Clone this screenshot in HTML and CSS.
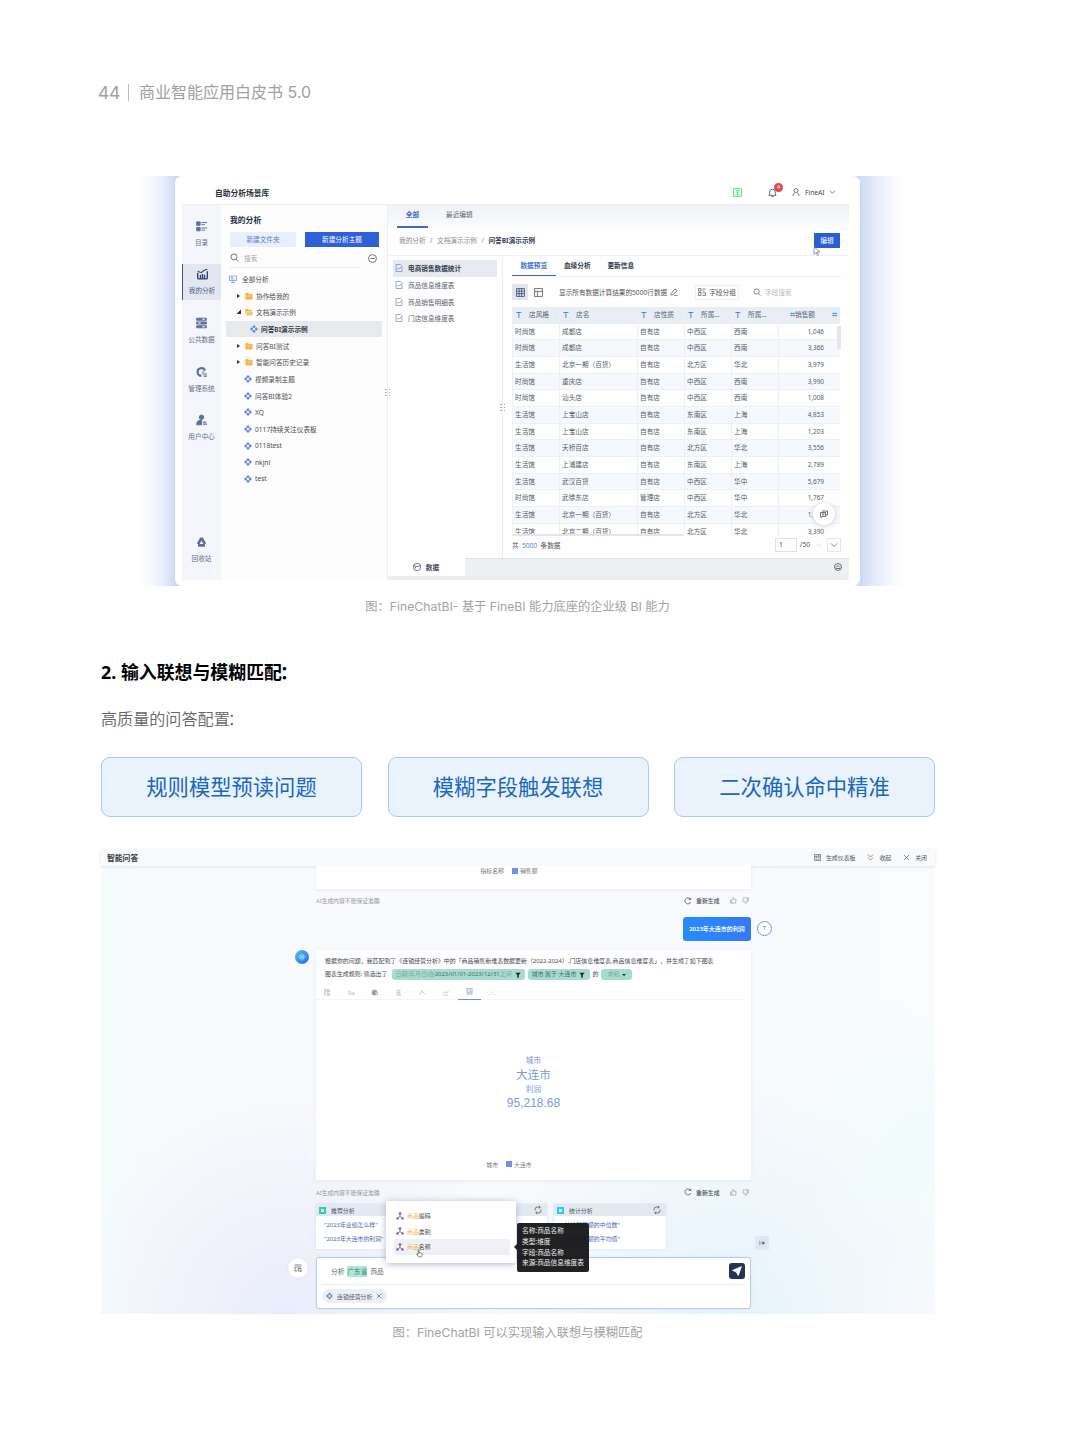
FILE: index.html
```
<!DOCTYPE html>
<html lang="zh-CN">
<head>
<meta charset="utf-8">
<title>商业智能应用白皮书 5.0</title>
<link rel="stylesheet" href="styles.css">
</head>
<body>
<svg width="0" height="0" class="defs">
  <symbol id="search" viewBox="0 0 16 16"><circle cx="7" cy="7" r="5.3"/><path d="M11 11l4 4"/></symbol>
  <symbol id="dia" viewBox="0 0 16 16"><path d="M8 0l8 8-8 8-8-8z" fill="currentColor" stroke="none"/><path d="M8 5L11 8 8 11 5 8z" fill="#fff" stroke="none"/><path d="M3 3l3 3M13 3l-3 3M3 13l3-3M13 13l-3-3" stroke="#fff" stroke-width="1.200"/></symbol>
  <symbol id="folder" viewBox="0 0 16 16"><path d="M1 2h5l2 2h7v11H1z" fill="#f5b443" stroke="none"/><path d="M4 8h8" stroke="#fde2a8" stroke-width="1.500"/></symbol>
  <symbol id="folderopen" viewBox="0 0 16 16"><path d="M1 2h5l2 2h6v3H4l-3 7z" fill="#f5b443" stroke="none"/><path d="M4.500 8H16l-2 7H2z" fill="#f8c568" stroke="none"/></symbol>
  <symbol id="doc" viewBox="0 0 16 16"><path d="M2 1h9l3 3v11H2z"/><path d="M5 11l2-3 2 2 3-4"/></symbol>
  <symbol id="reload" viewBox="0 0 16 16"><path d="M13.500 10A6 6 0 1 1 12.500 4M13.500 1v4h-4"/></symbol>
  <symbol id="refresh" viewBox="0 0 16 16"><path d="M2 9V7a5 5 0 0 1 5-5h5M14 7v2a5 5 0 0 1-5 5H4M10 0l2.500 2L10 5M6 11l-2.500 3L6 16"/></symbol>
  <symbol id="up" viewBox="0 0 16 16"><path d="M1 7h3v7H1zM4 7l3-6c2 0 2 1 2 5h5l-1 8H4"/></symbol>
  <symbol id="down" viewBox="0 0 16 16"><path d="M15 9h-3V2h3zM12 9l-3 6c-2 0-2-1-2-5H2l1-8h9"/></symbol>
  <symbol id="chev" viewBox="0 0 16 16"><path d="M2 5l6 6 6-6"/></symbol>
  <symbol id="nodes" viewBox="0 0 16 16"><circle cx="8" cy="3" r="2.200" fill="currentColor"/><circle cx="3" cy="13" r="2" fill="currentColor"/><circle cx="13" cy="13" r="2" fill="currentColor"/><path d="M8 4v5l-4 3M8 9l4 3" stroke-width="2"/></symbol>
  <symbol id="funnel" viewBox="0 0 16 16"><path d="M1 2h14l-5 6v7H6V8z" fill="currentColor" stroke="none"/></symbol>
  <symbol id="x" viewBox="0 0 16 16"><path d="M2 2l12 12M14 2L2 14"/></symbol>
</svg>

<header class="page-head"><span class="num">44</span><i></i><span class="book">商业智能应用白皮书 5.0</span></header>

<section class="fig1">
  <div class="window">
    <div class="topbar">
      <b class="app-name">自助分析场景库</b>
      <svg class="ic green" viewBox="0 0 16 16"><path d="M1 1h14v14H1zM4 4h8M8 12V6M5 8.500l3-2.500 3 2.500M4 12h8"/></svg>
      <span class="bell"><svg class="ic" viewBox="0 0 16 16"><path d="M1 13h14M3 13V7a5 5 0 0 1 10 0v6M6 15h4"/></svg><em>4</em></span>
      <svg class="ic person" viewBox="0 0 16 16"><circle cx="8" cy="5" r="4"/><path d="M2 16c0-4 3-6 4-7M14 16c0-4-3-6-4-7"/></svg>
      <span class="user">FineAI</span>
      <svg class="ic chevr"><use href="#chev"/></svg>
    </div>
    <div class="body">
      <nav class="rail">
        <a><svg viewBox="0 0 16 16"><path d="M1 2h5v5H1zM1 10h5v5H1z" fill="currentColor"/><path d="M8 3h8M8 6h5M8 11h8M8 14h5"/></svg>目录</a>
        <a class="on"><svg viewBox="0 0 16 16"><path d="M1 15V6M15 15V4M1 15h14M5 14V9M8 14V8M11 14V9" stroke-width="2"/><path d="M1 4l5 2 4-3 5-2" stroke-width="1.500"/></svg>我的分析</a>
        <a><svg viewBox="0 0 16 16"><path d="M1 1h14v3H1zM1 6.500h14v3H1zM1 12h14v3H1z" fill="currentColor"/><path d="M9 2.500h4M3 8h4M9 13.500h4" stroke="#fff"/></svg>公共数据</a>
        <a><svg viewBox="0 0 16 16"><path d="M13 6A5.500 5.500 0 1 0 8 13.500" stroke-width="3"/><path d="M9 8h3M9 11h7M11 14h5" stroke-width="1.500"/></svg>管理系统</a>
        <a><svg viewBox="0 0 16 16"><circle cx="8" cy="4" r="3.200" fill="currentColor"/><path d="M1 15c0-5 3-7 7-7v7z" fill="currentColor"/><path d="M10 11h5M10 14h6" stroke-width="2"/></svg>用户中心</a>
        <a class="bin"><svg viewBox="0 0 16 16"><path d="M8 2l5 9M8 2L3 11M3 13h10" stroke-width="4"/></svg>回收站</a>
      </nav>
      <aside class="tree">
        <h4>我的分析</h4>
        <div class="btns"><span class="b1">新建文件夹</span><span class="b2">新建分析主题</span></div>
        <div class="find"><span><svg class="ic"><use href="#search"/></svg>搜索</span><svg class="ic c" viewBox="0 0 16 16"><circle cx="8" cy="8" r="7"/><path d="M4 8h8"/></svg></div>
        <ul>
          <li class="l0"><svg class="ic blue" viewBox="0 0 16 16"><path d="M1 2h14v9H1zM8 11v3M4 15h8M4 5h4M4 8h7"/></svg>全部分析</li>
          <li class="l1"><i class="tri"></i><svg class="ic"><use href="#folder"/></svg>协作给我的</li>
          <li class="l1"><i class="tri open"></i><svg class="ic"><use href="#folderopen"/></svg>文档演示示例</li>
          <li class="l2 sel"><svg class="ic blue"><use href="#dia"/></svg>问答BI演示示例</li>
          <li class="l1"><i class="tri"></i><svg class="ic"><use href="#folder"/></svg>问答BI测试</li>
          <li class="l1"><i class="tri"></i><svg class="ic"><use href="#folder"/></svg>智能问答历史记录</li>
          <li class="l1b"><svg class="ic blue"><use href="#dia"/></svg>视频录制主题</li>
          <li class="l1b"><svg class="ic blue"><use href="#dia"/></svg>问答BI体验2</li>
          <li class="l1b"><svg class="ic blue"><use href="#dia"/></svg>XQ</li>
          <li class="l1b"><svg class="ic blue"><use href="#dia"/></svg>0117持续关注仪表板</li>
          <li class="l1b"><svg class="ic blue"><use href="#dia"/></svg>0118test</li>
          <li class="l1b"><svg class="ic blue"><use href="#dia"/></svg>nkjnl</li>
          <li class="l1b"><svg class="ic blue"><use href="#dia"/></svg>test</li>
        </ul>
        <span class="grip"></span>
      </aside>
      <main class="main">
        <div class="tabs"><b>全部</b><span>最近编辑</span></div>
        <div class="crumb"><span>我的分析</span><span>/</span><span>文档演示示例</span><span>/</span><b>问答BI演示示例</b><span class="edit">编辑</span>
          <svg class="cursor" viewBox="0 0 16 20"><path d="M2 1v15l4-4 3 6 2-1-3-6h6z" fill="#fff" stroke="#777"/></svg></div>
        <div class="split">
          <div class="files">
            <p class="on"><svg class="ic"><use href="#doc"/></svg>电商销售数据统计</p>
            <p><svg class="ic"><use href="#doc"/></svg>商品信息维度表</p>
            <p><svg class="ic"><use href="#doc"/></svg>商品销售明细表</p>
            <p><svg class="ic"><use href="#doc"/></svg>门店信息维度表</p>
            <span class="grip"></span>
          </div>
          <div class="detail">
            <div class="dtabs"><b class="on">数据预览</b><b>血缘分析</b><b>更新信息</b></div>
            <div class="tools">
              <span class="tg on"><svg class="ic" viewBox="0 0 16 16"><path d="M1 1h14v14H1zM1 5.500h14M1 10h14M5.500 1v14M10 1v14"/></svg></span>
              <span class="tg"><svg class="ic" viewBox="0 0 16 16"><path d="M1 1h14v14H1zM1 6h14M6 6v9"/></svg></span>
              <span class="info">显示所有数据计算结果的5000行数据</span><svg class="ic pen" viewBox="0 0 16 16"><path d="M2 11l8-9 4 3-7 8-5 1zM8 15h7"/></svg>
              <span class="group"><svg class="ic" viewBox="0 0 16 16"><path d="M1 1h5v5H1zM1 9h5v6H1zM9 2h6M9 6h4M9 10h6v5H9"/></svg>字段分组</span>
              <svg class="ic"><use href="#search"/></svg><span class="ph">字段搜索</span>
            </div>
            <div class="table">
              <div class="tr th"><span><i>T</i>店风格</span><span><i>T</i>店名</span><span><i>T</i>店性质</span><span><i>T</i>所属...</span><span><i>T</i>所属...</span><span class="n"><i>⌗</i>销售额<i>⌗</i></span></div>
              <div class="tr"><span>时尚馆</span><span>成都店</span><span>自有店</span><span>中西区</span><span>西南</span><span>1,046</span></div>
              <div class="tr"><span>时尚馆</span><span>成都店</span><span>自有店</span><span>中西区</span><span>西南</span><span>3,366</span></div>
              <div class="tr"><span>生活馆</span><span>北京一期（百货）</span><span>自有店</span><span>北方区</span><span>华北</span><span>3,979</span></div>
              <div class="tr"><span>时尚馆</span><span>重庆店</span><span>自有店</span><span>中西区</span><span>西南</span><span>3,990</span></div>
              <div class="tr"><span>时尚馆</span><span>汕头店</span><span>自有店</span><span>中西区</span><span>西南</span><span>1,008</span></div>
              <div class="tr"><span>生活馆</span><span>上宝山店</span><span>自有店</span><span>东南区</span><span>上海</span><span>4,853</span></div>
              <div class="tr"><span>生活馆</span><span>上宝山店</span><span>自有店</span><span>东南区</span><span>上海</span><span>1,203</span></div>
              <div class="tr"><span>生活馆</span><span>天桥百店</span><span>自有店</span><span>北方区</span><span>华北</span><span>3,556</span></div>
              <div class="tr"><span>生活馆</span><span>上浦建店</span><span>自有店</span><span>东南区</span><span>上海</span><span>2,789</span></div>
              <div class="tr"><span>生活馆</span><span>武汉百货</span><span>自有店</span><span>中西区</span><span>华中</span><span>5,679</span></div>
              <div class="tr"><span>时尚馆</span><span>武徐东店</span><span>管理店</span><span>中西区</span><span>华中</span><span>1,767</span></div>
              <div class="tr"><span>生活馆</span><span>北京一期（百货）</span><span>自有店</span><span>北方区</span><span>华北</span><span>1,767</span></div>
              <div class="tr"><span>生活馆</span><span>北京二期（百货）</span><span>自有店</span><span>北方区</span><span>华北</span><span>3,390</span></div>
              <i class="vbar"></i><i class="hbar"></i>
            </div>
            <div class="chat"><svg class="ic" viewBox="0 0 16 16"><path d="M4 2h11v8h-3M1 5h10v8H5l-3 2v-2H1zM4 8h5M4 10h3"/></svg></div>
            <div class="foot"><span>共&ensp;<u>5000</u>&ensp;条数据</span><span class="pg">1</span><span class="tot">/50</span><svg class="ic up"><use href="#chev"/></svg><span class="nx"><svg class="ic"><use href="#chev"/></svg></span></div>
          </div>
        </div>
        <div class="bottom"><b><svg class="ic" viewBox="0 0 16 16"><ellipse cx="8" cy="4" rx="6.500" ry="3"/><path d="M1.500 4v8c0 4 13 4 13 0V4M5 8v3"/></svg>数据</b><svg class="ic c" viewBox="0 0 16 16"><circle cx="8" cy="8" r="7"/><path d="M4 9l4-4 4 4M4 11h8"/></svg></div>
      </main>
    </div>
  </div>
</section>
<p class="caption cap1"><span>图：FineChatBI- 基于 FineBI 能力底座的企业级 BI 能力</span></p>

<h2>2. 输入联想与模糊匹配<span>：</span></h2>
<p class="lead">高质量的问答配置<span>：</span></p>
<div class="pills"><div>规则模型预读问题</div><div>模糊字段触发联想</div><div>二次确认命中精准</div></div>

<section class="fig2">
  <div class="bar2"><b>智能问答</b>
    <span><svg class="ic" viewBox="0 0 16 16"><path d="M1 1h14v14H1zM1 5h14M5 5v10M8 8h5M8 12h5M10 1v4"/></svg>生成仪表板</span>
    <span><svg class="ic" viewBox="0 0 16 16"><path d="M2 1l6 6 6-6M2 8l6 6 6-6"/></svg>收起</span>
    <span><svg class="ic"><use href="#x"/></svg>关闭</span></div>
  <div class="col">
    <div class="prev legend"><span>指标名称</span><i></i><span>销售额</span></div>
    <div class="meta"><span>AI生成内容不能保证准确</span><svg class="ic rl"><use href="#reload"/></svg><b>重新生成</b><svg class="ic t"><use href="#up"/></svg><svg class="ic t"><use href="#down"/></svg></div>
    <div class="ask"><b>2023年大连市的利润</b><span class="me">T</span></div>
    <div class="answer">
      <span class="bot"><svg viewBox="0 0 16 16"><path d="M8 1l7 7-7 7-7-7zM4.500 4.500l7 7M11.500 4.500l-7 7M8 4.500L11.500 8 8 11.500 4.500 8z"/></svg></span>
      <p class="ln">根据你的问题，我匹配到了《连锁经营分析》中的「商品销售新维表数据更新（2022-2024）,门店信息维度表,商品信息维度表」，并生成了如下图表</p>
      <p class="ln l2">图表生成规则: 筛选出了 <span class="tag g1"><s>日期(年月日)在</s>2023/01/01-2023/12/31<s>之间</s><svg class="ic"><use href="#funnel"/></svg></span><span class="tag g2">城市 属于 大连市<svg class="ic"><use href="#funnel"/></svg></span><em>的</em><span class="tag g3"><s>求和</s><i></i></span></p>
      <div class="types">
        <span><svg viewBox="0 0 16 16"><path d="M2 1v14M2 2h12M6 6h8M6 10h4M6 14h5M12 9v6" stroke-width="2"/></svg></span>
        <span><svg viewBox="0 0 16 16"><path d="M2 14V5h4M6 14V9h5v5M14 14V6"/></svg></span>
        <span><svg viewBox="0 0 16 16"><circle cx="8" cy="8" r="6" fill="#999"/><path d="M8 8h7v6z" fill="#fff"/></svg></span>
        <span><svg viewBox="0 0 16 16"><path d="M5 3h6v5H5zM2 14h12M3 11h10"/></svg></span>
        <span><svg viewBox="0 0 16 16"><path d="M1 14l6-9 3 4 5 4M5 2l3 3"/></svg></span>
        <span><svg viewBox="0 0 16 16"><path d="M1 10l4-4 4 3 6-4M2 14h12"/></svg></span>
        <span class="on"><svg viewBox="0 0 16 16"><path d="M2 1h12v10H2zM5 4v4M8 4h3v4H8M1 14h14"/></svg></span>
        <span><svg viewBox="0 0 16 16"><path d="M3 12h2M7 8h2M11 3h2M11 13h3M3 4h1"/></svg></span>
      </div>
      <div class="kpi"><small>城市</small><strong>大连市</strong><small>利润</small><strong class="v">95,218.68</strong></div>
      <div class="legend"><span>城市</span><i></i><span>大连市</span></div>
    </div>
    <div class="meta m2"><span>AI生成内容不能保证准确</span><svg class="ic rl"><use href="#reload"/></svg><b>重新生成</b><svg class="ic t"><use href="#up"/></svg><svg class="ic t"><use href="#down"/></svg></div>
    <div class="sugs">
      <div><h5><i></i>推荐分析</h5><p>"2023年业绩怎么样"</p><p>"2023年大连市的利润"</p></div>
      <div><h5><i></i>归因分析<svg class="ic"><use href="#refresh"/></svg></h5><p>&nbsp;</p><p>&nbsp;</p></div>
      <div><h5><i class="cy"></i>统计分析<svg class="ic"><use href="#refresh"/></svg></h5><p>"统计销售额的中位数"</p><p>"统计销售额的平均值"</p></div>
      <span class="exp"><svg class="ic" viewBox="0 0 16 16"><path d="M2 2v12M4 8h10M10 4v8M10 4l5 4-5 4" fill="currentColor"/></svg></span>
    </div>
    <div class="input">
      <span class="hist"><svg class="ic" viewBox="0 0 16 16"><path d="M1 2h14M2 6h12M2 6v8h4M8 9h6v5H8zM13 14l2 2"/></svg></span>
      <div class="q"><span>分析</span><mark>广东省</mark><span>商品</span><a class="send"><svg viewBox="0 0 16 16"><path d="M15 1L1 7l5 2 5-4-4 5 3 5z" fill="#fff"/></svg></a></div>
      <div class="chip"><svg class="ic blue"><use href="#dia"/></svg>连锁经营分析<svg class="ic xx"><use href="#x"/></svg></div>
    </div>
    <div class="menu">
      <p><svg class="ic"><use href="#nodes"/></svg><em>商品</em>编码</p>
      <p><svg class="ic"><use href="#nodes"/></svg><em>商品</em>类别</p>
      <p class="on"><svg class="ic"><use href="#nodes"/></svg><em>商品</em>名称</p>
      <svg class="hand" viewBox="0 0 16 18"><path d="M5 10V2c0-1.500 2-1.500 2 0v5l6 1.500c2 .5 1 8-1 8.500H7L2 11c-.5-1.500 1.500-2 3-.5z" fill="#fff" stroke="#333"/></svg>
    </div>
    <div class="tip">名称:商品名称<br>类型:维度<br>字段:商品名称<br>来源:商品信息维度表</div>
  </div>
</section>
<p class="caption cap2"><span>图：FineChatBI 可以实现输入联想与模糊匹配</span></p>
</body>
</html>
```
FILE: styles.css
```
* { box-sizing: border-box; margin: 0; padding: 0; }
body { width: 1080px; height: 1439px; background: #fff; overflow: hidden; font-family: "Noto Sans", "Noto Sans CJK SC", sans-serif; color: #333; }
i, em { font-style: normal; }
s, u { text-decoration: none; }
ul { list-style: none; }
svg { fill: none; stroke: currentColor; stroke-width: 1.4; flex: none; }
.defs { position: absolute; }
.ic { width: 8px; height: 8px; }
.blue { color: #5c89e2; }

.page-head { height: 176px; padding: 82px 0 0 98px; display: flex; align-items: flex-start; color: #a0a0a0; line-height: 20px; font-size: 16px; white-space: nowrap; }
.page-head .num { width: 30px; padding-top: 1px; font-size: 17.5px; font-family: Inter, sans-serif; letter-spacing: -.3px; }
.page-head i { width: 1px; height: 17px; margin-top: 2px; background: #bbb; }
.page-head .book { margin-left: 10px; font-family: Inter, "Noto Sans CJK SC", sans-serif; }

.fig1 { margin-left: 130px; width: 780px; height: 410px; padding-left: 45px; background: linear-gradient(90deg, #fff 8px, #f8faff 20px, #e4ebfa 35px, #c9d7f3 46px, #c9d7f3 56px, #fff 57px, #fff 718px, #ccdaf5 719px, #ccdaf5 729px, #e3eafa 745px, #f8faff 763px, #fff 775px); }
.window { width: 685px; height: 410px; padding: 4px 11px 6px 7px; border-radius: 7px; background: #fff; font-size: 6.65px; }
.topbar { height: 24px; display: flex; align-items: center; padding-left: 33px; color: #444; }
.app-name { font-size: 7.75px; width: 518px; color: #2b2f3c; }
.green { color: #43d853; margin-right: 26px; width: 9px; height: 9px; }
.bell { position: relative; display: flex; margin-right: 15px; color: #3f4a66; }
.bell .ic { width: 9px; height: 9px; }
.bell em { position: absolute; left: 6px; top: -5px; width: 9px; height: 9px; border-radius: 5px; background: #e0484b; color: #fff; font-size: 6px; line-height: 9px; text-align: center; }
.user { margin: 0 4px 0 5px; width: 20px; }
.chevr { width: 7px; }
.body { height: 376px; display: flex; border-top: 1px solid #edeff3; box-shadow: inset 0 4px 5px -3px #e4e8ee; }
.rail { width: 39px; background: #f5f5fc; padding-top: 11px; display: flex; flex-direction: column; color: #66708c; }
.rail a { height: 37px; margin-bottom: 12px; padding-top: 4px; display: flex; flex-direction: column; align-items: center; gap: 6px; line-height: 10px; letter-spacing: -.05px; }
.rail svg { width: 11px; height: 12px; color: #5f7098; }
.rail a.on { margin-top: -1px; margin-bottom: 13px; background: #e4e7f1; border-left: 1px solid #3c5891; color: #4e5d80; }
.rail .on svg { color: #28427c; }
.rail .bin { margin-top: 73px; }
.tree { position: relative; width: 167px; padding: 9px 5px 0; border-right: 1px solid #eceef1; background: #fdfdfe; }
.tree h4 { padding-left: 4px; font-size: 7.8px; line-height: 12px; color: #262f45; }
.btns { display: flex; gap: 9px; margin: 6px 0 0 4px; line-height: 15px; text-align: center; }
.b1 { width: 66px; height: 15px; background: #e9effc; color: #5b82cd; }
.b2 { width: 74px; height: 15px; background: #2e60d8; color: #fff; }
.find { display: flex; align-items: center; height: 20px; margin: 1px 0 2.500px 4px; color: #aaa; }
.find span { width: 130px; height: 19px; display: flex; align-items: center; gap: 5px; border-bottom: 1px solid #e8e9eb; }
.find svg { color: #555; width: 9px; height: 9px; }
.find .c { margin-left: 8px; }
.tree li { height: 16.68px; display: flex; align-items: center; gap: 4px; color: #4a4c52; white-space: nowrap; }
.tree .l0 { padding-left: 3px; gap: 5px; }
.tree .l1 { padding-left: 11px; gap: 3.500px; }
.tree .l1b { padding-left: 18px; gap: 3px; }
.tree .l2 { padding-left: 24px; gap: 3px; }
.tree .sel { background: #e7eaec; color: #30343c; font-weight: 600; }
.tri { width: 3px; margin-right: 1px; border-left: 3px solid #333; border-top: 2.5px solid transparent; border-bottom: 2.5px solid transparent; }
.tri.open { border: 0; height: 4px; width: 4px; margin-right: 0; background: linear-gradient(135deg, transparent 50%, #333 50%); }
.grip { position: absolute; right: -3px; top: 183px; width: 6px; height: 8px; background: radial-gradient(circle, #aaa .7px, transparent 1px) 0 0 / 4px 3px; }
.main { width: 461px; display: flex; flex-direction: column; background: #fefefe; }
.tabs { height: 23px; padding-left: 9px; display: flex; background: linear-gradient(#eff3f8, #fafcfe); line-height: 20px; }
.tabs b { width: 31px; text-align: center; color: #3967d3; border-bottom: 2px solid #3d69cc; }
.tabs span { margin-left: 18px; color: #5d6475; }
.crumb { position: relative; height: 28px; display: flex; align-items: center; gap: 4.500px; padding: 0 9px 3px 11px; border-bottom: 1px solid #f0f1f3; color: #888b93; white-space: nowrap; }
.crumb b { color: #343d55; }
.edit { margin-left: auto; width: 26px; height: 15px; line-height: 15px; text-align: center; color: #fff; background: #2b5dd7; }
.cursor { position: absolute; right: 28px; top: 18px; width: 8px; height: 11px; }
.split { display: flex; height: 302px; }
.files { position: relative; width: 115px; padding: 4px 5px 0; border-right: 1px solid #eceef1; }
.files p { height: 16.68px; display: flex; align-items: center; padding-left: 2px; gap: 5px; color: #5c606b; }
.files p.on { background: #e7e9f1; font-weight: 600; color: #333a4c; }
.files .ic { color: #6d86c9; }
.files .grip { top: 147px; }
.detail { position: relative; width: 346px; padding: 0 8px 0 9px; }
.dtabs { height: 21px; display: flex; border-bottom: 1px solid #f0f1f3; line-height: 20px; }
.dtabs b { width: 43.500px; text-align: center; color: #30384b; }
.dtabs b.on { border-bottom: 1.5px solid #3d69cc; color: #4672d4; }
.tools { height: 30px; display: flex; align-items: center; color: #555; white-space: nowrap; }
.tg { width: 16px; height: 16px; display: grid; place-items: center; margin-right: 2px; }
.tg.on { background: #e2e3eb; color: #33476f; }
.tg .ic { width: 9px; height: 9px; }
.info { margin-left: 11px; width: 109px; }
.pen { margin-left: 2px; }
.group { width: 44px; height: 15px; display: flex; align-items: center; justify-content: center; gap: 3px; margin: 0 14px 0 17px; border: 1px solid #f0f0f2; }
.ph { margin-left: 4px; color: #bbb; }
.table { position: relative; height: 229px; overflow: hidden; color: #565b68; }
.tr { display: grid; grid-template-columns: 47px 78px 47px 47px 47px 62px; height: 16.68px; line-height: 16px; border-bottom: 1px solid #edf0f4; width: 328px; }
.tr:nth-child(odd) { background: #f5f8fc; }
.tr.th { background: #e9eef4; border: 0; color: #586274; }
.tr span { padding-left: 2px; border-left: 1px solid #edf1f5; white-space: nowrap; overflow: hidden; }
.tr span:last-child { padding: 0 16px 0 0; text-align: right; font-size: 6.4px; }
.tr.th span { display: flex; padding: 0 3px 0 3px; font-size: 6.65px; }
.tr.th i { flex: none; width: 13px; color: #4474cf; font-size: 9px; font-family: "Liberation Sans"; }
.tr.th .n i { color: #4aa9cf; }
.tr.th .n i:last-child { margin-left: auto; width: 7px; }
.vbar { position: absolute; right: 0; top: 19px; width: 4px; height: 23px; background: #e5e6e9; }
.hbar { position: absolute; left: 0; bottom: 0; width: 171px; height: 2px; background: #e5e6e9; }
.chat { position: absolute; right: 14px; top: 247px; width: 22px; height: 22px; border-radius: 50%; background: #fff; box-shadow: 0 1px 5px #ccd; display: grid; place-items: center; }
.foot { height: 17px; display: flex; align-items: center; color: #555; }
.foot u { color: #6289da; }
.pg { margin-left: auto; width: 22px; height: 14px; line-height: 12px; padding-left: 3px; border: 1px solid #e2e2e5; }
.tot { width: 18px; padding-left: 3px; }
.foot .up { transform: rotate(180deg); color: #ccc; margin-right: 5px; width: 7px; }
.nx { width: 14px; height: 14px; border: 1px solid #e6e6e8; display: grid; place-items: center; }
.bottom { height: 22px; background: #edf0f2; border-top: 1px solid #dee1e5; display: flex; justify-content: space-between; align-items: center; padding: 0 7px 5px 0; }
.bottom b { width: 78px; height: 18px; margin: 0 0 0 -1px; display: flex; align-items: center; justify-content: center; gap: 5px; background: #fff; color: #3d4557; }

.caption { text-align: center; color: #a3a3a3; font: 400 12.25px/20px Inter, "Noto Sans CJK SC", sans-serif; white-space: nowrap; }
.cap1 { padding-top: 11px; height: 75px; width: 1035px; }
.cap2 { padding-top: 9px; width: 1035px; }
h2 { margin-left: 101px; font: 700 17.900px/22px "Noto Sans", "Noto Sans CJK SC", sans-serif; color: #000; height: 47px; }
h2 span { margin-left: -2px; }
.lead { margin-left: 101px; height: 49px; font: 350 16.1px/20px "Noto Sans CJK SC", sans-serif; color: #666; }
.lead span { margin-left: -2px; }
.pills { margin-left: 101px; display: grid; grid-template-columns: 261px 261px 261px; gap: 25.5px; }
.pills div { height: 60px; border: 1px solid #a9c8ee; border-radius: 9px; background: #eaf3fb; color: #1b66bf; font: 21.3px/56px "Noto Sans CJK SC", sans-serif; text-align: center; }

.fig2 { margin: 32px 0 0 101px; width: 834px; height: 465px; font-size: 5.9px; background: radial-gradient(circle at 22% 100%, #e9ecfb 0, transparent 28%), radial-gradient(circle at 75% 100%, #e5f3fb, transparent 30%), radial-gradient(circle at 98% 65%, #f1fcfc, transparent 18%), linear-gradient(90deg, #f5fdfd, #f8fafc 6%, #f8fafd 80%, #fafbfd); }
.bar2 { height: 17px; display: flex; align-items: center; padding: 0 8px 1px 6px; background: #f8fafb; box-shadow: 0 1px 3px #dfe2e8; color: #50545b; }
.bar2 b { font-size: 7.8px; margin-right: auto; color: #363a40; }
.bar2 span { display: flex; align-items: center; gap: 5px; margin-left: 12px; }
.bar2 .ic { width: 7px; height: 7px; }
.col { position: relative; width: 435px; margin-left: 215px; }
.legend { display: flex; align-items: center; justify-content: center; color: #777; }
.legend i { width: 6px; height: 6px; background: #6b92ea; margin: 0 2px 0 8px; }
.prev { position: relative; height: 23px; padding: 0 49px 14px 0; background: #fff; box-shadow: 0 1px 4px #e4e9f8; clip-path: inset(0 -5px -6px -5px); }
.meta { height: 28px; display: flex; align-items: center; padding: 0 0 5px 0; color: #999; }
.meta span { width: 368px; font-size: 5.8px; }
.meta b { width: 34px; margin-left: 4px; color: #4b505c; font-weight: 500; }
.meta .rl { color: #444; }
.meta .t { width: 7px; height: 7px; margin-right: 5px; }
.meta .t:last-child { margin-right: 2px; }
.ask { height: 33px; display: flex; margin-left: 367px; width: 90px; }
.ask b { width: 68px; height: 24px; line-height: 24px; text-align: center; color: #eef6ff; background: linear-gradient(90deg, #278cfb, #3479f8); border-radius: 3px; font-size: 6px; }
.me { width: 15px; height: 15px; margin: 4px 0 0 6px; border: 1px solid #7499d4; border-radius: 50%; color: #557bc0; text-align: center; line-height: 13px; background: #fff; }
.answer { position: relative; height: 230px; background: #fff; box-shadow: 0 1px 4px #e4e9f4; padding-top: 5px; }
.bot { position: absolute; left: -21px; top: 0; width: 14px; height: 14px; border-radius: 50%; background: linear-gradient(135deg, #43c8f7, #2864e2); color: #bfe5ff; padding: 3px; display: flex; }
.ln { height: 13px; line-height: 13px; padding-left: 9px; font-size: 5.94px; color: #444953; white-space: nowrap; }
.l2 { display: flex; align-items: center; }
.l2 em { margin: 0 3px; }
.tag { height: 11px; display: flex; align-items: center; justify-content: center; gap: 3px; border-radius: 3px; background: #a6dbd0; line-height: 11px; color: #456e69; }
.tag s { color: #81aaa3; }
.tag .ic { width: 6px; height: 6px; color: #222; }
.g1 { width: 133px; margin: 0 3px 0 4px; gap: 0; }
.g1 .ic { margin-left: 3px; }
.g2 { width: 62px; }
.g3 { width: 31px; }
.g3 i { border: 2.500px solid transparent; border-top-color: #222; margin-top: 2px; }
.types { height: 19px; margin: 0 8px 0 0; display: flex; border-bottom: 1px solid #f4f5f7; color: #aaa; }
.types span { width: 23.6px; height: 19px; display: grid; place-items: center; padding-top: 3px; }
.types svg { width: 7px; height: 7px; }
.types .on { color: #7f8fb0; border-bottom: 1.5px solid #6b8fde; }
.kpi { margin-top: 53.500px; height: 99.500px; display: flex; flex-direction: column; align-items: center; color: #7b9bd8; }
.kpi small { font-size: 7.7px; line-height: 13px; }
.kpi strong { font-weight: 400; font-size: 11.6px; line-height: 16px; }
.kpi .v { font: 12px/14px "Liberation Sans", sans-serif; }
.answer .legend { height: 10px; padding-right: 49px; }
.kpi + .legend { margin-top: 6px; }
.m2 { height: 24px; padding-bottom: 0; }
.sugs { height: 53px; display: flex; gap: 7.500px; }
.sugs div { width: 111.500px; height: 45px; background: #fff; box-shadow: 0 0 2px #cbd9ee; color: #476bc0; }
.sugs h5 { height: 12px; margin-bottom: 3px; padding: 0 5px 0 3px; display: flex; align-items: center; background: #e2e9f3; font-size: 5.9px; font-weight: 400; color: #4c5668; }
.sugs h5 i { width: 7px; height: 7px; margin-right: 5px; border: 2px solid #36ccb3; background: #c6f4ed; }
.sugs h5 .cy { border-color: #35c8de; }
.sugs h5 .ic { margin-left: auto; color: #444; }
.sugs p { height: 14px; line-height: 13px; padding-left: 8px; white-space: nowrap; }
.sugs .exp { margin: 32px -18px 0 auto; width: 14px; height: 14px; background: #e0e7f5; display: grid; place-items: center; color: #566; }
.exp .ic { width: 6px; }
.input { position: relative; height: 52px; border: 1px solid #b5d0e4; border-radius: 3px; background: #fff; padding: 0 5px; box-shadow: 0 0 3px #d3e5f4; }
.hist { position: absolute; left: -29px; top: 0; width: 20px; height: 20px; border-radius: 50%; background: #fff; box-shadow: 0 0 2px #d5dbe9; display: grid; place-items: center; color: #555; }
.q { height: 27px; display: flex; align-items: center; padding-left: 9px; gap: 3px; border-bottom: 1px solid #e8ebef; font-size: 6.7px; color: #666; }
.q mark { background: #aee8d4; color: #398b70; line-height: 11px; }
.send { margin-left: auto; width: 16px; height: 16px; border-radius: 3px; background: #1e3555; padding: 3px; display: flex; }
.send svg { width: 10px; height: 10px; color: #fff; }
.chip { margin-top: 4px; width: 65px; height: 14px; border-radius: 7px; background: #edf1f6; display: flex; align-items: center; padding-left: 4px; gap: 4px; color: #555b66; white-space: nowrap; }
.chip .ic { width: 7px; }
.chip .xx { width: 6px; color: #333; }
.menu { position: absolute; left: 70px; top: 335px; width: 130px; height: 62px; padding: 7px 6px 0 8px; border-radius: 2px; background: #fff; box-shadow: 0 1px 7px #aab4c6; }
.menu p { height: 15.6px; display: flex; align-items: center; padding-left: 2px; color: #444; }
.menu p.on { background: #eff1f5; }
.menu .ic { color: #8e66c9; margin-right: 3px; }
.menu em { color: #f0b252; }
.hand { position: absolute; left: 30px; top: 48px; width: 7px; height: 9px; }
.tip { position: absolute; left: 201px; top: 357px; width: 72px; height: 49px; border-radius: 2px; padding: 3px 0 0 5px; background: rgba(24,24,26,.96); color: #eee; font-size: 6.7px; line-height: 10.8px; white-space: nowrap; }
.tip::before { content: ""; position: absolute; left: -3px; top: 21px; border: 3px solid transparent; border-right-color: #222; border-left: 0; }
```
